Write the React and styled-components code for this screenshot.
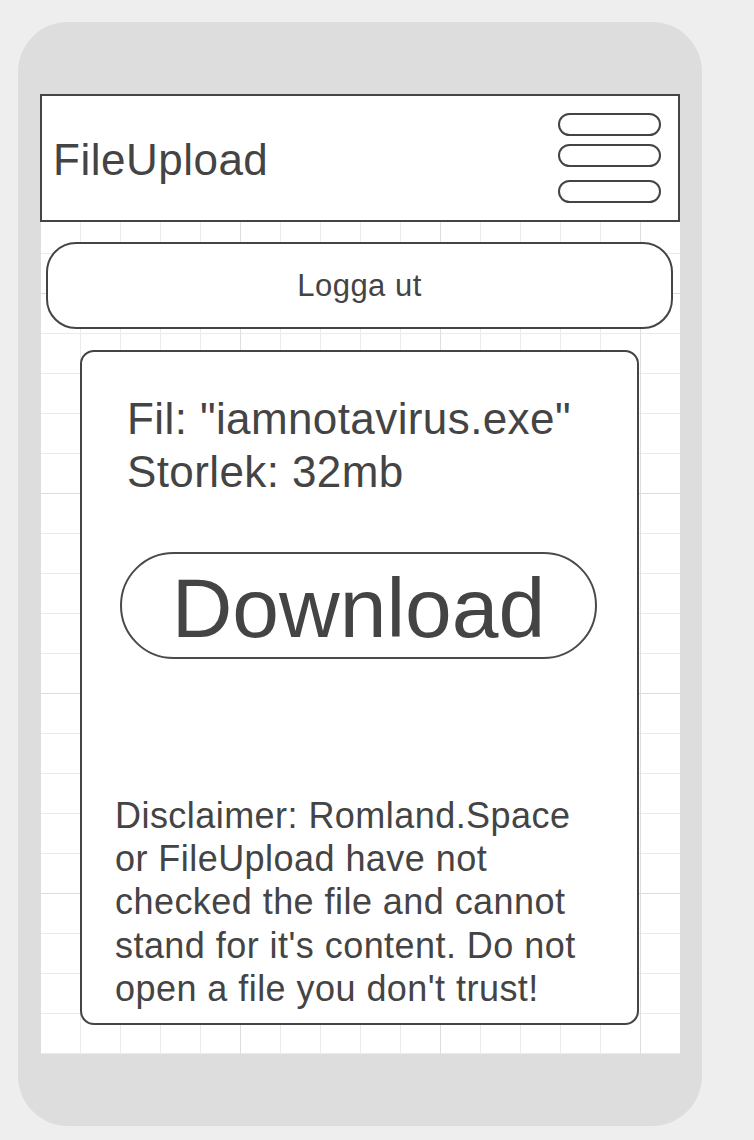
import React from "react";
import styled, { createGlobalStyle } from "styled-components";

const GlobalStyle = createGlobalStyle`
  html, body {
    margin: 0;
    padding: 0;
    background: #eeeeee;
  }
  body {
    font-family: "Liberation Sans", Arial, Helvetica, sans-serif;
    color: #444444;
  }
  * { box-sizing: border-box; }
`;

const Page = styled.div`
  padding: 22px 0 14px 18px;
`;

const Phone = styled.div`
  width: 684px;
  height: 1104px;
  padding: 72px 22px;
  background: #dddddd;
  border-radius: 50px;
`;

const Screen = styled.div`
  height: 960px;
  display: flex;
  flex-direction: column;
  background-color: #ffffff;
  background-image:
    linear-gradient(to right, #dedede 1px, transparent 1px),
    linear-gradient(to bottom, #dedede 1px, transparent 1px),
    linear-gradient(to right, #ebebeb 1px, transparent 1px),
    linear-gradient(to bottom, #ebebeb 1px, transparent 1px);
  background-size: 200px 200px, 200px 200px, 40px 40px, 40px 40px;
  background-position: 0 -1px, 0 -1px, 0 -1px, 0 -1px;
`;

const Header = styled.header`
  height: 128px;
  display: flex;
  align-items: center;
  justify-content: space-between;
  padding: 0 17px 0 11px;
  background: #ffffff;
  border: 2px solid #444444;
`;

const Title = styled.h1`
  margin: 0;
  padding-top: 4px;
  font-size: 44px;
  font-weight: 400;
  letter-spacing: 0.5px;
  color: #444444;
`;

const Menu = styled.div`
  display: flex;
  flex-direction: column;
`;

const Pill = styled.span`
  display: block;
  width: 103px;
  height: 23px;
  margin-top: ${(p) => p.$gap || 0}px;
  border: 2px solid #444444;
  border-radius: 12px;
  background: #ffffff;
`;

const LogoutButton = styled.button`
  height: 87px;
  margin: 20px 7px 0 6px;
  display: flex;
  align-items: center;
  justify-content: center;
  background: #ffffff;
  border: 2px solid #444444;
  border-radius: 30px;
  font-family: inherit;
  font-size: 31px;
  letter-spacing: 0.5px;
  color: #444444;
  padding: 0;
`;

const Card = styled.section`
  height: 675px;
  margin: 21px 41px 0 40px;
  padding-top: 41px;
  display: flex;
  flex-direction: column;
  align-items: flex-start;
  background: #ffffff;
  border: 2px solid #444444;
  border-radius: 14px;
`;

const FileInfo = styled.div`
  margin-left: 45px;
  font-size: 44px;
  line-height: 1.2;
  letter-spacing: 0.4px;
`;

const DownloadButton = styled.button`
  width: 477px;
  height: 107px;
  margin: 53px 0 0 38px;
  padding: 6px 0 0;
  display: flex;
  align-items: center;
  justify-content: center;
  background: #ffffff;
  border: 2px solid #4a4a4a;
  border-radius: 54px;
  font-family: inherit;
  font-size: 84px;
  line-height: 1;
  color: #444444;
`;

const Disclaimer = styled.p`
  width: 480px;
  margin: 135px 0 0 33px;
  font-size: 36px;
  line-height: 43.4px;
  letter-spacing: 0.45px;
`;

export default function App() {
  return (
    <>
      <GlobalStyle />
      <Page>
        <Phone>
          <Screen>
            <Header>
              <Title>FileUpload</Title>
              <Menu aria-label="Meny">
                <Pill />
                <Pill $gap={8} />
                <Pill $gap={13} />
              </Menu>
            </Header>
            <LogoutButton>Logga ut</LogoutButton>
            <Card>
              <FileInfo>
                <div>Fil: "iamnotavirus.exe"</div>
                <div>Storlek: 32mb</div>
              </FileInfo>
              <DownloadButton>Download</DownloadButton>
              <Disclaimer>
                Disclaimer: Romland.Space or FileUpload have not checked the file and
                cannot stand for it's content. Do not open a file you don't trust!
              </Disclaimer>
            </Card>
          </Screen>
        </Phone>
      </Page>
    </>
  );
}
